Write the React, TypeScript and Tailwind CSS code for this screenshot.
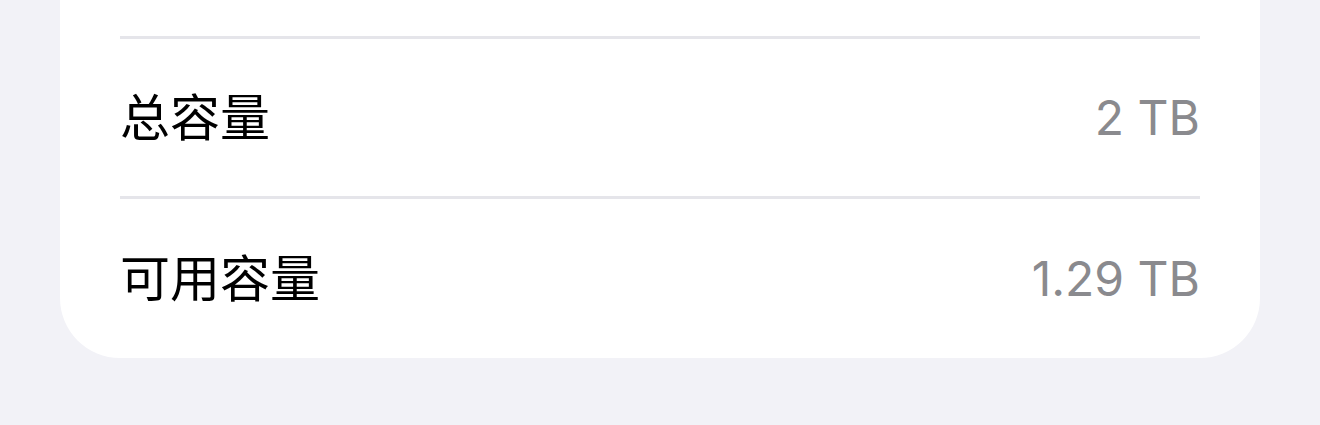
import React from "react";

const rows = [
  { label: "总容量", value: "2 TB" },
  { label: "可用容量", value: "1.29 TB" },
];

const App = () => {
  return (
    <div className="h-[425px] w-[1320px] overflow-hidden bg-[#f2f2f7] px-[60px]">
      <div className="rounded-b-[60px] bg-white px-[60px]">
        {/* tail of the row above, cut off by the viewport */}
        <div className="h-[36px]" />
        {rows.map((row, i) => (
          <div key={row.label}>
            <div className="h-[3px] bg-[#e5e5ea]" />
            <div
              className={
                i === 0
                  ? "flex h-[157px] items-center justify-between"
                  : "flex h-[159px] items-center justify-between"
              }
            >
              <span
                className="-translate-y-1 text-[50px] leading-none text-black"
                style={{ fontFamily: '"Noto Sans CJK SC", "Noto Sans", sans-serif' }}
              >
                {row.label}
              </span>
              <span
                className="text-[48px] leading-none text-[#8a8a8e]"
                style={{ fontFamily: "Inter, sans-serif" }}
              >
                {row.value}
              </span>
            </div>
          </div>
        ))}
      </div>
    </div>
  );
};

export default App;
